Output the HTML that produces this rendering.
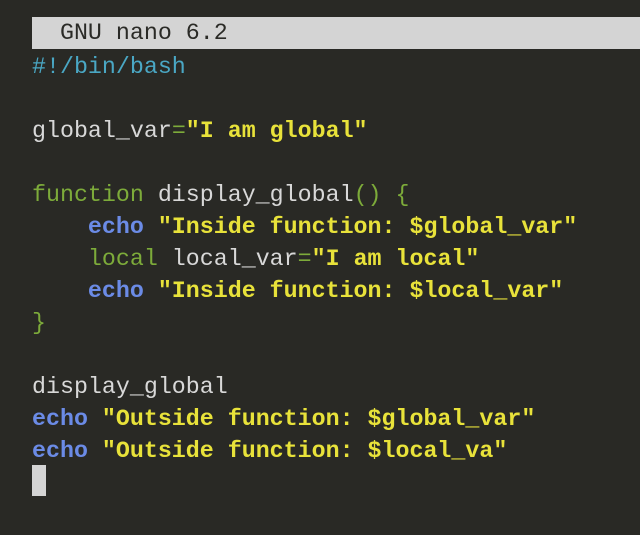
<!DOCTYPE html>
<html><head><style>
html,body{margin:0;padding:0}
body{width:640px;height:535px;background:#292925;overflow:hidden;position:relative;font-family:"Liberation Mono",monospace;font-size:23.3px;color:#d8d8d8}
.l{position:absolute;left:32px;height:32px;line-height:34px;white-space:pre}
.t{background:#d4d4d4;color:#2a2a26;width:608px;line-height:33px}
.c{color:#4aa7c4}.g{color:#7dab3a}.y{color:#e8e23a;font-weight:bold}.b{color:#6b8be6;font-weight:bold}
.cur{position:absolute;left:32px;top:465px;width:14px;height:31px;background:#d4d4d4}
</style></head><body>
<div class="l t" style="top:17px">  GNU nano 6.2</div>
<div class="l c" style="top:50px">#!/bin/bash</div>
<div class="l" style="top:114px">global_var<span class="g">=</span><span class="y">"I am global"</span></div>
<div class="l" style="top:178px"><span class="g">function</span> display_global<span class="g">() {</span></div>
<div class="l" style="top:210px">    <span class="b">echo</span> <span class="y">"Inside function: $global_var"</span></div>
<div class="l" style="top:242px">    <span class="g">local</span> local_var<span class="g">=</span><span class="y">"I am local"</span></div>
<div class="l" style="top:274px">    <span class="b">echo</span> <span class="y">"Inside function: $local_var"</span></div>
<div class="l g" style="top:306px">}</div>
<div class="l" style="top:370px">display_global</div>
<div class="l" style="top:402px"><span class="b">echo</span> <span class="y">"Outside function: $global_var"</span></div>
<div class="l" style="top:434px"><span class="b">echo</span> <span class="y">"Outside function: $local_va"</span></div>
<div class="cur"></div>
</body></html>
